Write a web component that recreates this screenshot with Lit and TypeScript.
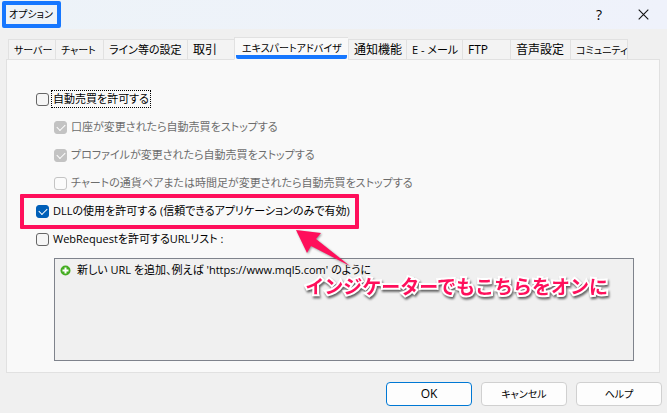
import { LitElement, html, css, svg } from "lit";
import { customElement, state } from "lit/decorators.js";
import { classMap } from "lit/directives/class-map.js";

interface Tab { label: string; weight: number; size: "small" | "medium" | "large"; }
interface Option { id: string; label: string; checked: boolean; disabled?: boolean; nested?: boolean; marked?: boolean; focus?: boolean; }

const TABS: Tab[] = [
  { label: "サーバー", weight: 47, size: "small" },
  { label: "チャート", weight: 48, size: "small" },
  { label: "ライン等の設定", weight: 84, size: "medium" },
  { label: "取引", weight: 47, size: "large" },
  { label: "エキスパートアドバイザ", weight: 114, size: "small" },
  { label: "通知機能", weight: 58, size: "large" },
  { label: "E - メール", weight: 56, size: "medium" },
  { label: "FTP", weight: 48, size: "large" },
  { label: "音声設定", weight: 60, size: "large" },
  { label: "コミュニティ", weight: 58, size: "small" },
];

const OPTIONS: Option[] = [
  { id: "auto", label: "自動売買を許可する", checked: false, focus: true },
  { id: "account", label: "口座が変更されたら自動売買をストップする", checked: true, disabled: true, nested: true },
  { id: "profile", label: "プロファイルが変更されたら自動売買をストップする", checked: true, disabled: true, nested: true },
  { id: "symbol", label: "チャートの通貨ペアまたは時間足が変更されたら自動売買をストップする", checked: false, disabled: true, nested: true },
  { id: "dll", label: "DLLの使用を許可する (信頼できるアプリケーションのみで有効)", checked: true, marked: true },
  { id: "web", label: "WebRequestを許可するURLリスト :", checked: false },
];

@customElement("app-root")
export class AppRoot extends LitElement {
  @state() private active = 4;

  static styles = css`
    :host {
      display: flex;
      flex-direction: column;
      box-sizing: border-box;
      min-height: 100vh;
      background: #f0f0f0;
      color: #000;
      font: 11px/18px "Open Sans", "Noto Sans CJK JP", sans-serif;
      font-feature-settings: "palt";
      white-space: nowrap;
    }
    * { box-sizing: border-box; }
    button { font: inherit; font-feature-settings: inherit; color: inherit; margin: 0; }
    .titlebar {
      display: flex;
      align-items: center;
      height: 29px;
      padding: 1px 8px 1px 2px;
      background: linear-gradient(90deg, #edf3f8, #eff2fb);
    }
    .title {
      margin: 0 auto 0 0;
      padding: 0 4px 1px 3px;
      border: 4px solid #1677ff;
      border-radius: 2px;
      font-size: 10px;
      font-weight: 400;
      min-width: 57px;
    }
    .caption-button {
      width: 32px;
      height: 24px;
      margin-left: 12px;
      padding: 0;
      border: 0;
      background: none;
      display: grid;
      place-items: center;
      font-size: 14px;
    }
    .tabs {
      display: grid;
      align-items: end;
      height: 31px;
      margin: 0 39px -1px 8px;
      position: relative;
    }
    .tab {
      min-width: 0;
      height: 21px;
      padding: 0 0 0 5px;
      border: 1px solid #e1e1e1;
      border-right-width: 0;
      background: #f3f3f3;
      text-align: left;
      line-height: 18px;
    }
    .tab:last-child { border-right-width: 1px; }
    .tab.small { font-size: 10px; }
    .tab.large { font-size: 12px; }
    .tab.active {
      height: 23px;
      padding: 0 1px;
      border-bottom-color: #f9f9f9;
      background: #f9f9f9;
    }
    .tab.active span {
      display: block;
      height: 20px;
      padding-left: 6px;
      border-bottom: 4px solid #1677ff;
      border-radius: 2px;
    }
    .panel {
      flex: 1;
      display: flex;
      flex-direction: column;
      margin: 0 7px 0 6px;
      padding: 25px 25px 11px 29px;
      border: 1px solid #e1e1e1;
      background: #f9f9f9;
    }
    .options { display: grid; }
    .row {
      position: relative;
      display: flex;
      align-items: center;
      height: 28px;
      gap: 3px;
      justify-self: start;
    }
    .row.nested { margin-left: 18px; }
    .row label { padding: 0 1px; line-height: 16px; }
    .row.disabled label { color: #6d6d6d; }
    .row.focus label { outline: 1px dotted #000; }
    input {
      appearance: none;
      display: grid;
      place-items: center;
      width: 13px;
      height: 13px;
      margin: 0;
      border: 1px solid #666;
      border-radius: 3px;
      background: #f6f6f6;
    }
    input:disabled { border-color: #c4c4c4; background: #fbfbfb; }
    input:checked { border-color: #005fb8; background: #005fb8; }
    input:checked:disabled { border-color: #c3c3c3; background: #c3c3c3; }
    input:checked::after {
      content: "";
      width: 7px;
      height: 4px;
      border: solid #fff;
      border-width: 0 0 1px 1px;
      transform: translateY(-1px) rotate(-45deg);
    }
    .highlight {
      position: absolute;
      inset: -3px auto -4px -16px;
      width: 339px;
      border: 4px solid #ff0f5b;
      border-radius: 1px;
      pointer-events: none;
    }
    .arrow {
      position: absolute;
      left: 258px;
      top: 31px;
      z-index: 1;
      filter: drop-shadow(1px 1px 1px #0006);
      pointer-events: none;
    }
    .urls {
      position: relative;
      flex: 1;
      min-height: 60px;
      margin: 5px 0 0 18px;
      padding: 2px 5px;
      border: 1px solid #7f838c;
      background: #f0f0f0;
      list-style: none;
    }
    .url { display: flex; align-items: center; gap: 6px; }
    .note {
      position: absolute;
      right: 25px;
      top: 12px;
      font: 700 19px/30px "Noto Sans CJK JP", sans-serif;
      color: #ff0f5b;
      -webkit-text-stroke: 4px #fff;
      paint-order: stroke fill;
      filter: drop-shadow(1px 2px 1px #0009);
    }
    .footer {
      display: flex;
      justify-content: flex-end;
      gap: 9px;
      padding: 9px 5px 7px;
    }
    .action {
      width: 86px;
      height: 24px;
      padding: 0;
      border: 1px solid #d0d0d0;
      border-radius: 4px;
      background: #fdfdfd;
      font-size: 10px;
      line-height: 20px;
    }
    .action.primary { border-color: #0078d4; font-size: 12px; }
  `;

  private row(o: Option) {
    return html`
      <div class=${classMap({ row: true, nested: !!o.nested, disabled: !!o.disabled, focus: !!o.focus })}>
        <input type="checkbox" id=${o.id} .checked=${o.checked} ?disabled=${o.disabled} />
        <label for=${o.id}>${o.label}</label>
        ${o.marked
          ? html`<div class="highlight"></div>
              <svg class="arrow" width="60" height="42" viewBox="0 0 60 42" aria-hidden="true">
                ${svg`<path d="M2 2L27 5L22 11L56 38L17 18L13 25Z" fill="#ff0f5b"/>`}
              </svg>`
          : null}
      </div>`;
  }

  render() {
    return html`
      <header class="titlebar">
        <h1 class="title">オプション</h1>
        <button class="caption-button" aria-label="ヘルプを表示">?</button>
        <button class="caption-button" aria-label="閉じる">
          <svg width="11" height="11" viewBox="0 0 11 11" aria-hidden="true">
            <path d="M.7 .7L10.3 10.3M10.3 .7L.7 10.3" stroke="#111" stroke-width="1.1" />
          </svg>
        </button>
      </header>
      <nav class="tabs" role="tablist" style="grid-template-columns:${TABS.map((t) => `${t.weight}fr`).join(" ")}">
        ${TABS.map((t, i) => html`
          <button role="tab" class=${classMap({ tab: true, [t.size]: true, active: i === this.active })}
            aria-selected=${i === this.active} @click=${() => (this.active = i)}><span>${t.label}</span></button>`)}
      </nav>
      <main class="panel">
        <div class="options">${OPTIONS.map((o) => this.row(o))}</div>
        <ul class="urls">
          <li class="url">
            <svg width="11" height="11" viewBox="0 0 11 11" aria-hidden="true">
              <circle cx="5.5" cy="5.5" r="5" fill="#45ad22" />
              <path d="M5.5 2.5V8.5M2.5 5.5H8.5" stroke="#fff" stroke-width="2" />
            </svg>
            <span>新しい URL を追加、例えば 'https://www.mql5.com' のように</span>
          </li>
          <li class="note">インジケーターでもこちらをオンに</li>
        </ul>
      </main>
      <footer class="footer">
        <button class="action primary">OK</button>
        <button class="action">キャンセル</button>
        <button class="action">ヘルプ</button>
      </footer>`;
  }
}
